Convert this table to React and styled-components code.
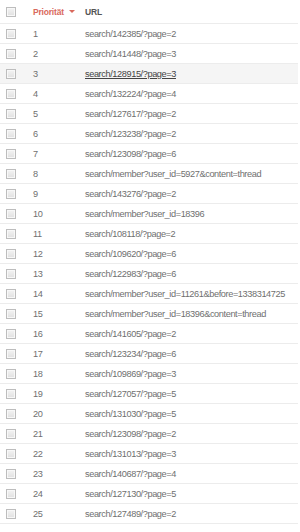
import React from "react";
import styled, { createGlobalStyle } from "styled-components";

const GlobalStyle = createGlobalStyle`
  html, body { margin: 0; padding: 0; background: #fff; }
  body { font-family: Arial, "Liberation Sans", sans-serif; }
`

const rows = [
  "search/142385/?page=2",
  "search/141448/?page=3",
  "search/128915/?page=3",
  "search/132224/?page=4",
  "search/127617/?page=2",
  "search/123238/?page=2",
  "search/123098/?page=6",
  "search/member?user_id=5927&content=thread",
  "search/143276/?page=2",
  "search/member?user_id=18396",
  "search/108118/?page=2",
  "search/109620/?page=6",
  "search/122983/?page=6",
  "search/member?user_id=11261&before=1338314725",
  "search/member?user_id=18396&content=thread",
  "search/141605/?page=2",
  "search/123234/?page=6",
  "search/109869/?page=3",
  "search/127057/?page=5",
  "search/131030/?page=5",
  "search/123098/?page=2",
  "search/131013/?page=3",
  "search/140687/?page=4",
  "search/127130/?page=5",
  "search/127489/?page=2",
];

const Table = styled.div`
  width: 298px;
  font-family: Arial, "Liberation Sans", sans-serif;
  font-size: 9.2px;
  letter-spacing: -0.4px;
`
const Row = styled.div`
  display: grid;
  grid-template-columns: 33px 52px 1fr;
  align-items: center;
  height: ${p => p.$head ? 23 : 19}px;
  border-bottom: 1px solid #ececec;
  background: ${p => p.$active ? "#f5f5f5" : "#fff"};
  color: #6f6f6f;
`
const Box = styled.span`
  display: block;
  width: 8px;
  height: 8px;
  margin-left: 6px;
  border: 1px solid #bdbdbd;
  background: linear-gradient(180deg, #f4f4f4, #e0e0e0);
  box-shadow: inset 0 0 0 1px #f8f8f8;
`
const HeadCell = styled.span`
  font-weight: bold;
  color: ${p => p.$sorted ? "#d9695c" : "#555"};
  font-size: 8.5px;
  letter-spacing: -0.2px;
  display: flex;
  align-items: center;
  gap: 5px;
`
const Arrow = styled.span`
  width: 0;
  height: 0;
  border-left: 3px solid transparent;
  border-right: 3px solid transparent;
  border-top: 3px solid #d9695c;
`
const Num = styled.span``
const Url = styled.span`
  white-space: nowrap;
  color: ${p => p.$active ? "#444" : "#6f6f6f"};
  text-decoration: ${p => p.$active ? "underline" : "none"};
`

export default function App() {
  return (
    <>
      <GlobalStyle />
      <Table>
        <Row $head>
          <Box />
          <HeadCell $sorted>Priorität <Arrow /></HeadCell>
          <HeadCell>URL</HeadCell>
        </Row>
        {rows.map((url, i) => (
          <Row key={i} $active={i === 2}>
            <Box />
            <Num>{i + 1}</Num>
            <Url $active={i === 2}>{url}</Url>
          </Row>
        ))}
      </Table>
    </>
  );
}
